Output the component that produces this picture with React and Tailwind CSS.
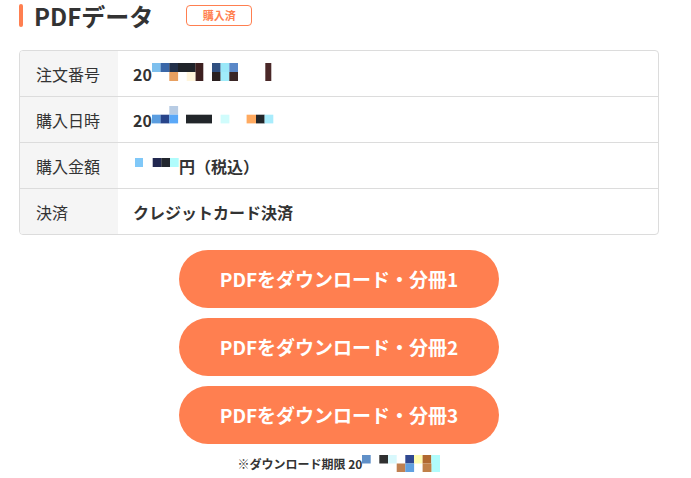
const CORAL = "#ff7f50";

function Mosaic({ w, h, cells, className = "" }) {
  return (
    <svg width={w} height={h} viewBox={`0 0 ${w} ${h}`} className={`shrink-0 ${className}`}>
      {cells.map(([x, y, cw, ch, c], i) => (
        <rect key={i} x={x} y={y} width={cw} height={ch} fill={c} />
      ))}
    </svg>
  );
}

const orderCells = [
  [0, 0, 8.7, 9, "#7ec0ee"],
  [8.6, 0, 8.8, 9, "#3a67a8"],
  [17.3, 0, 8.8, 9, "#22304a"],
  [26, 0, 17.4, 9, "#1f2329"],
  [43.3, 0, 8, 18, "#3d2020"],
  [60, 0, 8.7, 9, "#2f4f80"],
  [68.6, 0, 8.8, 9, "#9ae8f8"],
  [77.3, 0, 8.7, 9, "#5a88c8"],
  [113.3, 0, 6, 18, "#4a2828"],
  [17.3, 9, 8.8, 9, "#e8a060"],
  [34.7, 9, 8.7, 9, "#fff5dc"],
  [60, 9, 8.7, 9, "#2a2020"],
  [68.6, 9, 8.8, 9, "#a0ecfa"],
  [77.3, 9, 8.7, 9, "#3a2626"],
];

const dateCells = [
  [17.3, 0, 8.8, 8.7, "#b8cce4"],
  [0, 8.7, 8.7, 8.7, "#5a9de0"],
  [8.6, 8.7, 8.8, 8.7, "#28448a"],
  [17.3, 8.7, 8.8, 8.7, "#5aa8f8"],
  [34, 8.7, 26, 8.7, "#22262a"],
  [68.6, 8.7, 8.8, 8.7, "#d0fcfc"],
  [94.6, 8.7, 9.5, 8.7, "#ffaa60"],
  [104, 8.7, 8.7, 8.7, "#22262a"],
  [112.6, 8.7, 8.7, 8.7, "#a8ecfc"],
];

const priceCells = [
  [2, 0, 8, 9, "#80c8f8"],
  [19.7, 0, 8.7, 9, "#222850"],
  [28.3, 0, 8.8, 9, "#22262e"],
  [37, 0, 8.7, 9, "#b0fcfc"],
];

const limitCells = [
  [0, 0, 8.7, 8.5, "#6090c8"],
  [17.3, 0, 8.8, 8.5, "#303030"],
  [26, 0, 8.7, 8.5, "#d8f8fc"],
  [43.3, 0, 8.8, 8.5, "#304890"],
  [52, 0, 8.7, 8.5, "#fffcb0"],
  [60.6, 0, 8.8, 8.5, "#b06830"],
  [69.3, 0, 8.7, 17, "#b0fcfc"],
  [34.7, 8.5, 8.7, 8.5, "#c08050"],
  [43.3, 8.5, 8.8, 8.5, "#60a0e0"],
  [60.6, 8.5, 8.8, 8.5, "#c08048"],
];

const rows = [
  {
    label: "注文番号",
    value: (
      <>
        <span>20</span>
        <Mosaic w={120} h={18} cells={orderCells} className="-mt-[4px]" />
      </>
    ),
  },
  {
    label: "購入日時",
    value: (
      <>
        <span>20</span>
        <Mosaic w={122} h={26} cells={dateCells} className="-mt-[2px]" />
      </>
    ),
  },
  {
    label: "購入金額",
    value: (
      <>
        <Mosaic w={46} h={9} cells={priceCells} className="-mt-[6px]" />
        <span>円（税込）</span>
      </>
    ),
  },
  { label: "決済", value: <span>クレジットカード決済</span> },
];

export default function App() {
  return (
    <div className="w-[691px] h-[478px] bg-white font-['Noto_Sans_CJK_JP',sans-serif] text-[#333] px-[19px]">
      <div className="w-[640px]">
        <div className="flex items-center h-[31px]">
          <div className="w-[4px] h-[23px] rounded-[2px] bg-[#ff7f50]" />
          <h2 className="ml-[11px] text-[24px] leading-[31px] font-bold text-[#333]">PDFデータ</h2>
          <span className="ml-[33px] h-[21px] w-[66px] flex items-center justify-center rounded-[4px] border border-[#ff7f50] text-[11px] font-bold text-[#ff7f50]">
            購入済
          </span>
        </div>

        <div className="mt-[19px] rounded-[4px] border border-[#dcdcdc] overflow-hidden">
          {rows.map((r, i) => (
            <div
              key={r.label}
              className={`flex ${i > 0 ? "h-[46px] border-t border-[#dcdcdc]" : "h-[45px]"}`}
            >
              <div className="w-[98px] bg-[#f5f5f5] pl-[16px] flex items-center text-[16px]">
                {r.label}
              </div>
              <div className="flex-1 pl-[15px] flex items-center text-[16px] font-bold">
                {r.value}
              </div>
            </div>
          ))}
        </div>

        <div className="mt-[15px] flex flex-col items-center gap-[10px]">
          {[1, 2, 3].map((n) => (
            <button
              key={n}
              className="w-[320px] h-[58px] rounded-full bg-[#ff7f50] text-white text-[19px] font-bold flex items-center justify-center"
            >
              PDFをダウンロード・分冊{n}
            </button>
          ))}
        </div>

        <div className="mt-[11px] flex items-center justify-center text-[12px] leading-[14px] font-bold">
          <span>※ダウンロード期限 20</span>
          <Mosaic w={78} h={17} cells={limitCells} />
        </div>
      </div>
    </div>
  );
}
